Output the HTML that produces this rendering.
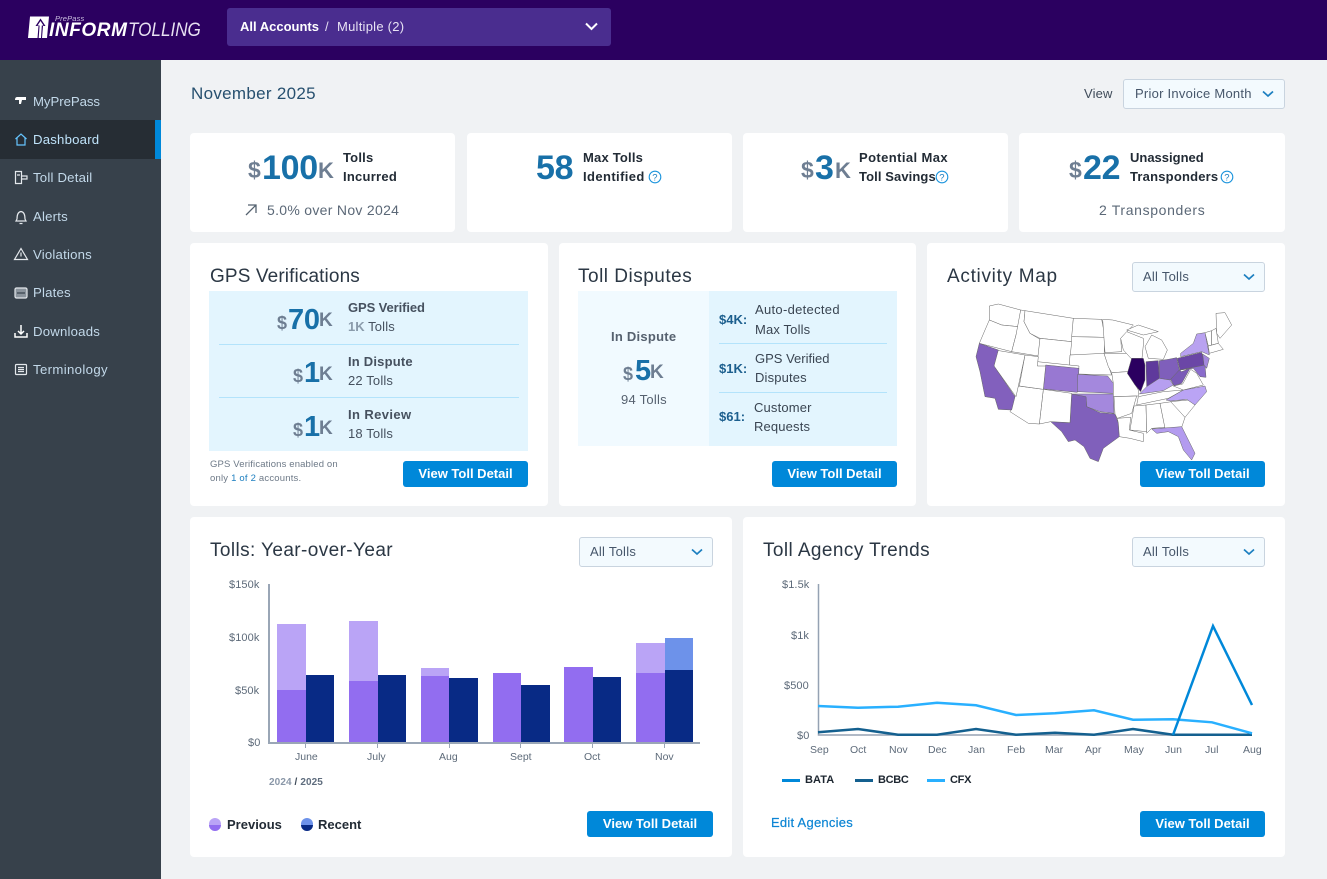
<!DOCTYPE html>
<html><head><meta charset="utf-8"><style>
*{box-sizing:border-box}
html,body{margin:0;padding:0}
body{width:1327px;height:879px;position:relative;overflow:hidden;background:#f0f2f4;font-family:"Liberation Sans",sans-serif;letter-spacing:.15px;color:#3f4b59}
.a,.t,.c{position:absolute}
.t{white-space:nowrap;line-height:1;font-size:13px}
.b{font-weight:bold;letter-spacing:.2px}
.c{background:#fff;border-radius:4px}
.h{font-size:19px;color:#2b3744;letter-spacing:.5px}
.nv{font-size:13.2px;color:#c3d9ea;left:33px;letter-spacing:.2px}
.btn{position:absolute;width:125px;height:26px;background:#0088d9;border-radius:3px;color:#fff;font-weight:bold;font-size:13px;line-height:26px;text-align:center;letter-spacing:0}
.sel{position:absolute;height:30px;background:#f3fafe;border:1px solid #c9d4df;border-radius:3px;font-size:13px;line-height:28px;padding-left:10px;color:#46566a;letter-spacing:.25px}
.sel svg{position:absolute;right:9px;top:10px}
.blue{color:#1870a8;letter-spacing:0}.gr{color:#6e7e92;letter-spacing:0}
.ax{font-size:11px;color:#5d6a79;letter-spacing:.1px}
.mo{font-size:10.5px;letter-spacing:0}
</style></head><body>
<div class="a" style="left:0;top:0;width:1327px;height:60px;background:#2b0060"></div>
<svg class="a" style="left:27px;top:15px" width="24" height="24" viewBox="0 0 24 24"><path d="M3 1.500H22L20 23H1Z" fill="#fff"/><path d="M13.500 3.500L18.500 11H16L15 23H10.500L11.500 11H8.500Z" fill="#2b0060"/><path d="M13.500 6L16.500 10.500H14.800L14 23H11.700L12.600 10.500H10.500Z" fill="#fff"/></svg>
<div class="t" style="left:55px;top:15px;font-size:7.5px;font-style:italic;color:#cbbfe0;letter-spacing:.02em">PrePass</div>
<div class="t" style="left:49px;top:21px;font-size:19px;font-weight:bold;font-style:italic;color:#fff;letter-spacing:.6px">INFORM</div>
<div class="t" style="left:128px;top:21px;font-size:19px;font-style:italic;color:#e7e0f1;letter-spacing:0;transform:scaleX(.9);transform-origin:left">TOLLING</div>
<div class="a" style="left:227px;top:8px;width:384px;height:38px;background:#4a2d8f;border-radius:3px"></div>
<div class="t b" style="left:240px;top:20px;color:#fff;letter-spacing:0">All Accounts</div>
<div class="t" style="left:325px;top:20px;color:#e4ddf2">/</div>
<div class="t" style="left:337px;top:20px;color:#e8e3f4;letter-spacing:.25px">Multiple (2)</div>
<svg class="a" style="left:584px;top:21px" width="15" height="12"><path d="M2 2.500L7.500 8L13 2.500" fill="none" stroke="#fff" stroke-width="2"/></svg>

<div class="a" style="left:0;top:60px;width:161px;height:819px;background:#37414b"></div>
<div class="a" style="left:0;top:120px;width:161px;height:39px;background:#262d34"></div>
<div class="a" style="left:155px;top:120px;width:6px;height:39px;background:#0088d9"></div>
<svg class="a" style="left:12px;top:92px" width="18" height="290" viewBox="0 0 18 290" fill="none" stroke="#e4e8ec" stroke-width="1.200">
<path d="M3 8H14V5H5Q3 5 3 8ZM7 8H10L9 12H7Z" fill="#fff" stroke="none"/>
<path d="M3.500 47L9 42L14.500 47M5 46V53H13V46" stroke="#66c5ff"/>
<path d="M3.500 79.500H9.500V91.500H3.500ZM9.500 84H15V87H9.500M5 83H8"/>
<path d="M5 127Q5 120 9 119.500Q13 120 13 127L14 129H4ZM7.500 131.500H10.500"/>
<path d="M9 156.500L15.500 167.500H2.500ZM9 160.500V164.500"/>
<rect x="3" y="196" width="12" height="10" rx="1.500" fill="#8b949d"/><path d="M5 201H13" stroke="#37414b"/>
<path d="M9 233V242M6 239L9 242L12 239M3 241V245H15V241" stroke="#fff" stroke-width="1.500"/>
<rect x="3.500" y="272.500" width="11" height="10" rx="1"/><path d="M6 275.500H12M6 277.500H12M6 279.500H12"/>
</svg>
<div class="t nv" style="top:95px;letter-spacing:-.05px">MyPrePass</div>
<div class="t nv" style="top:133px;color:#bfe3fa">Dashboard</div>
<div class="t nv" style="top:171px">Toll Detail</div>
<div class="t nv" style="top:210px">Alerts</div>
<div class="t nv" style="top:248px">Violations</div>
<div class="t nv" style="top:286px">Plates</div>
<div class="t nv" style="top:325px">Downloads</div>
<div class="t nv" style="top:363px;letter-spacing:.35px">Terminology</div>

<div class="t" style="left:191px;top:85px;font-size:17px;color:#27506f;letter-spacing:.3px">November 2025</div>
<div class="t" style="left:1084px;top:87px;color:#3f4b59">View</div>
<div class="sel" style="left:1123px;top:79px;width:162px;padding-left:11px">Prior Invoice Month<svg width="12" height="8" style="right:10px"><path d="M1 1.500L6 6L11 1.500" fill="none" stroke="#1c7fc0" stroke-width="1.700"/></svg></div>

<!-- row 1 -->
<div class="c" style="left:190px;top:133px;width:265px;height:99px"></div>
<div class="c" style="left:467px;top:133px;width:265px;height:99px"></div>
<div class="c" style="left:743px;top:133px;width:265px;height:99px"></div>
<div class="c" style="left:1019px;top:133px;width:266px;height:99px"></div>

<div class="t b gr" style="left:248px;top:159px;font-size:23px">$</div>
<div class="t b blue" style="left:262px;top:151px;font-size:34px;letter-spacing:-.3px">100</div>
<div class="t b gr" style="left:318px;top:160px;font-size:22px">K</div>
<div class="t b" style="left:343px;top:151px;color:#222b35">Tolls</div>
<div class="t b" style="left:343px;top:170px;color:#222b35;letter-spacing:.25px">Incurred</div>
<svg class="a" style="left:244px;top:203px" width="14" height="14"><path d="M2 12L12 2M4 2H12V10" fill="none" stroke="#55626f" stroke-width="1.300"/></svg>
<div class="t" style="left:267px;top:203px;font-size:14px;color:#5b6877;letter-spacing:.3px">5.0% over Nov 2024</div>

<div class="t b blue" style="left:536px;top:151px;font-size:34px;letter-spacing:-.3px">58</div>
<div class="t b" style="left:583px;top:151px;color:#222b35">Max Tolls</div>
<div class="t b" style="left:583px;top:170px;color:#222b35;letter-spacing:.4px">Identified</div>
<svg class="a" style="left:648px;top:170px" width="14" height="14"><circle cx="7" cy="7" r="5.800" fill="none" stroke="#1d95dd" stroke-width="1.100"/><text x="7" y="10.500" font-size="9.500" text-anchor="middle" fill="#1d7fc0" font-family="Liberation Sans">?</text></svg>

<div class="t b gr" style="left:801px;top:159px;font-size:23px">$</div>
<div class="t b blue" style="left:815px;top:151px;font-size:34px">3</div>
<div class="t b gr" style="left:835px;top:160px;font-size:22px">K</div>
<div class="t b" style="left:859px;top:151px;color:#222b35;letter-spacing:.4px">Potential Max</div>
<div class="t b" style="left:859px;top:170px;color:#222b35;letter-spacing:.1px">Toll Savings</div>
<svg class="a" style="left:935px;top:170px" width="14" height="14"><circle cx="7" cy="7" r="5.800" fill="none" stroke="#1d95dd" stroke-width="1.100"/><text x="7" y="10.500" font-size="9.500" text-anchor="middle" fill="#1d7fc0" font-family="Liberation Sans">?</text></svg>

<div class="t b gr" style="left:1069px;top:159px;font-size:23px">$</div>
<div class="t b blue" style="left:1083px;top:151px;font-size:34px;letter-spacing:-.3px">22</div>
<div class="t b" style="left:1130px;top:151px;color:#222b35;letter-spacing:0">Unassigned</div>
<div class="t b" style="left:1130px;top:170px;color:#222b35">Transponders</div>
<svg class="a" style="left:1220px;top:170px" width="14" height="14"><circle cx="7" cy="7" r="5.800" fill="none" stroke="#1d95dd" stroke-width="1.100"/><text x="7" y="10.500" font-size="9.500" text-anchor="middle" fill="#1d7fc0" font-family="Liberation Sans">?</text></svg>
<div class="t" style="left:1099px;top:203px;font-size:14px;color:#5b6877;letter-spacing:.65px">2 Transponders</div>

<!-- row 2 -->
<div class="c" style="left:190px;top:243px;width:358px;height:263px"></div>
<div class="c" style="left:559px;top:243px;width:357px;height:263px"></div>
<div class="c" style="left:927px;top:243px;width:358px;height:263px"></div>

<div class="t h" style="left:210px;top:267px;letter-spacing:.12px">GPS Verifications</div>
<div class="a" style="left:209px;top:291px;width:319px;height:160px;background:#e3f5fe"></div>
<div class="a" style="left:219px;top:344px;width:300px;height:1px;background:#b3e3fb"></div>
<div class="a" style="left:219px;top:397px;width:300px;height:1px;background:#b3e3fb"></div>
<div class="t b gr" style="left:277px;top:314px;font-size:18px">$</div>
<div class="t b blue" style="left:288px;top:306px;font-size:29px;letter-spacing:-.3px">70</div>
<div class="t b gr" style="left:319px;top:311px;font-size:19px">K</div>
<div class="t b" style="left:348px;top:301px;color:#46515f;letter-spacing:-.1px">GPS Verified</div>
<div class="t" style="left:348px;top:320px;color:#46515f"><span class="b" style="color:#8a9bab;letter-spacing:0">1K</span> Tolls</div>
<div class="t b gr" style="left:293px;top:367px;font-size:18px">$</div>
<div class="t b blue" style="left:304px;top:359px;font-size:29px">1</div>
<div class="t b gr" style="left:319px;top:365px;font-size:19px">K</div>
<div class="t b" style="left:348px;top:355px;color:#46515f">In Dispute</div>
<div class="t" style="left:348px;top:374px;color:#46515f">22 Tolls</div>
<div class="t b gr" style="left:293px;top:421px;font-size:18px">$</div>
<div class="t b blue" style="left:304px;top:413px;font-size:29px">1</div>
<div class="t b gr" style="left:319px;top:419px;font-size:19px">K</div>
<div class="t b" style="left:348px;top:408px;color:#46515f;letter-spacing:.4px">In Review</div>
<div class="t" style="left:348px;top:427px;color:#46515f">18 Tolls</div>
<div class="t" style="left:210px;top:460px;font-size:9.5px;color:#6d7987;letter-spacing:.15px">GPS Verifications enabled on</div>
<div class="t" style="left:210px;top:474px;font-size:9.5px;color:#6d7987;letter-spacing:.2px">only <span style="color:#1d7fc0">1 of 2</span> accounts.</div>
<div class="btn" style="left:403px;top:461px">View Toll Detail</div>

<div class="t h" style="left:578px;top:267px">Toll Disputes</div>
<div class="a" style="left:578px;top:291px;width:131px;height:155px;background:#f1faff"></div>
<div class="a" style="left:709px;top:291px;width:188px;height:155px;background:#e3f5fe"></div>
<div class="a" style="left:719px;top:343px;width:168px;height:1px;background:#b3e3fb"></div>
<div class="a" style="left:719px;top:392px;width:168px;height:1px;background:#b3e3fb"></div>
<div class="t b" style="left:611px;top:330px;color:#56616f;letter-spacing:.25px">In Dispute</div>
<div class="t b gr" style="left:623px;top:365px;font-size:18px">$</div>
<div class="t b blue" style="left:635px;top:357px;font-size:29px">5</div>
<div class="t b gr" style="left:650px;top:363px;font-size:19px">K</div>
<div class="t" style="left:621px;top:393px;color:#56616f;letter-spacing:.25px">94 Tolls</div>
<div class="t b" style="left:719px;top:313px;color:#1c5f8e;letter-spacing:0">$4K:</div>
<div class="t" style="left:755px;top:303px;color:#3a4552;letter-spacing:.3px">Auto-detected</div>
<div class="t" style="left:755px;top:323px;color:#3a4552">Max Tolls</div>
<div class="t b" style="left:719px;top:362px;color:#1c5f8e;letter-spacing:0">$1K:</div>
<div class="t" style="left:755px;top:352px;color:#3a4552;letter-spacing:0">GPS Verified</div>
<div class="t" style="left:755px;top:371px;color:#3a4552">Disputes</div>
<div class="t b" style="left:719px;top:410px;color:#1c5f8e;letter-spacing:0">$61:</div>
<div class="t" style="left:754px;top:401px;color:#3a4552">Customer</div>
<div class="t" style="left:754px;top:420px;color:#3a4552">Requests</div>
<div class="btn" style="left:772px;top:461px">View Toll Detail</div>

<div class="t h" style="left:947px;top:267px;letter-spacing:.7px">Activity Map</div>
<div class="sel" style="left:1132px;top:262px;width:133px">All Tolls<svg width="12" height="8"><path d="M1 1.500L6 6L11 1.500" fill="none" stroke="#1c7fc0" stroke-width="1.700"/></svg></div>
<svg class="a" style="left:930px;top:290px" width="340" height="180" viewBox="0 0 1020 540" stroke="#666" stroke-width="1.500" stroke-linejoin="round" fill="#fff">
<path d="M178 48L205 42L272 60L265 110L215 105L178 90Z"/>
<path d="M178 90L215 105L265 110L258 135L245 185L148 160L165 120Z"/>
<path d="M272 60L285 62L282 95L300 130L330 148L325 198L245 185L258 135Z"/>
<path d="M285 62L430 85L425 155L330 145L300 130L282 95Z"/>
<path d="M430 85L515 88L525 142L425 140Z"/>
<path d="M425 140L525 142L522 198L420 195Z"/>
<path d="M330 145L425 155L418 225L322 215Z"/>
<path d="M420 195L522 190L545 255L445 252L447 228L418 225Z"/>
<path d="M340 297L347 225L447 235L442 307Z" fill="#9878d2"/>
<path d="M443 253L533 258L550 280L550 310L442 305Z" fill="#a488dd"/>
<path d="M425 312L550 312L552 370L510 365L470 350L468 322L425 318Z" fill="#a488dd"/>
<path d="M425 312L468 320L470 350L510 368L555 372L565 400L568 440L520 475L505 515L480 505L462 470L435 450L415 455L395 425L362 395L420 398Z" fill="#8060bb"/>
<path d="M340 298L425 310L420 398L362 395L328 402Z"/>
<path d="M265 288L340 298L328 402L295 400L240 365L250 330Z"/>
<path d="M285 195L325 200L322 228L347 228L340 298L268 288Z"/>
<path d="M195 180L285 195L265 288L258 320L192 228Z"/>
<path d="M148 160L205 180L192 228L255 320L245 360L205 358L195 325L165 320L150 245L138 200Z" fill="#8260bd"/>
<path d="M518 88L548 90L610 105L572 145L575 185L525 188Z"/>
<path d="M522 190L600 190L612 205L595 245L545 248L535 230Z"/>
<path d="M545 248L592 245L625 300L625 318L610 318L550 320L550 280Z"/>
<path d="M552 320L620 318L605 370L562 385L555 372Z"/>
<path d="M562 385L602 382L598 420L640 430L640 455L600 445L568 440L565 400Z"/>
<path d="M572 145L590 125L640 145L640 165L636 205L603 205L580 180Z"/>
<path d="M590 120L625 105L685 125L640 135ZM655 205L645 170L665 135L695 150L712 180L700 208Z"/>
<path d="M605 205L640 205L645 225L645 270L632 305L615 285L592 250Z" fill="#2b0060"/>
<path d="M648 215L685 212L688 265L650 290Z" fill="#5f3a9c"/>
<path d="M688 212L715 208L740 203L748 240L720 270L688 265Z" fill="#7f5fbb"/>
<path d="M628 312L650 290L688 265L720 270L730 285L700 302Z" fill="#b69ff0"/>
<path d="M625 320L700 305L760 300L715 325L620 345Z"/>
<path d="M612 348L648 345L650 425L600 420Z"/>
<path d="M648 345L690 340L705 412L665 415L650 430Z"/>
<path d="M690 340L725 335L765 382L755 412L705 415Z"/>
<path d="M722 335L775 330L795 345L765 382Z"/>
<path d="M708 330L760 300L825 288L830 305L795 345L770 328L722 333Z" fill="#baa4f5"/>
<path d="M730 288L758 282L782 238L800 250L820 285L760 300Z"/>
<path d="M722 268L748 240L755 245L780 235L755 280L732 287Z" fill="#7a5ab7"/>
<path d="M742 205L815 187L825 225L750 240Z" fill="#6b46a6"/>
<path d="M752 190L790 160L800 132L825 128L838 195L815 185L752 200Z" fill="#b9a2f0"/>
<path d="M750 240L825 225L828 262L810 260L790 235Z" fill="#8a6ccc"/>
<path d="M818 192L838 205L830 235L822 225Z" fill="#a488dd"/>
<path d="M665 417L755 410L795 490L785 510L760 480L745 440L715 425L680 430Z" fill="#b39bef"/>
<path d="M858 70L885 68L905 105L870 145L860 130Z"/>
<path d="M825 128L845 122L845 165L835 168ZM845 122L858 115L865 160L845 165Z"/>
<path d="M835 168L865 160L880 178L838 190Z"/>
</svg>
<div class="btn" style="left:1140px;top:461px">View Toll Detail</div>

<!-- row 3 -->
<div class="c" style="left:190px;top:517px;width:542px;height:340px"></div>
<div class="c" style="left:743px;top:517px;width:542px;height:340px"></div>
<div class="t h" style="left:210px;top:541px;letter-spacing:.4px">Tolls: Year-over-Year</div>
<div class="sel" style="left:579px;top:537px;width:134px">All Tolls<svg width="12" height="8"><path d="M1 1.500L6 6L11 1.500" fill="none" stroke="#1c7fc0" stroke-width="1.700"/></svg></div>
<svg class="a" style="left:190px;top:570px" width="530" height="190" shape-rendering="crispEdges">
<g fill="#baa4f6"><rect x="87" y="54" width="29" height="67"/><rect x="159" y="51" width="29" height="60"/><rect x="231" y="98" width="28" height="9"/><rect x="446" y="73" width="29" height="31"/></g>
<g fill="#926df0"><rect x="87" y="120" width="29" height="52"/><rect x="159" y="111" width="29" height="61"/><rect x="231" y="106" width="28" height="66"/><rect x="303" y="103" width="28" height="69"/><rect x="374" y="97" width="29" height="75"/><rect x="446" y="103" width="29" height="69"/></g>
<rect x="475" y="68" width="28" height="33" fill="#6d92ea"/>
<g fill="#082a85"><rect x="116" y="105" width="28" height="67"/><rect x="188" y="105" width="28" height="67"/><rect x="259" y="108" width="29" height="64"/><rect x="331" y="115" width="29" height="57"/><rect x="403" y="107" width="28" height="65"/><rect x="475" y="100" width="28" height="72"/></g>
<rect x="78" y="14" width="2" height="158" fill="#9aa6b6"/>
<rect x="78" y="172" width="432" height="2" fill="#9aa6b6"/>
<g fill="#9aa6b6"><rect x="115" y="174" width="1" height="4"/><rect x="187" y="174" width="1" height="4"/><rect x="259" y="174" width="1" height="4"/><rect x="330" y="174" width="1" height="4"/><rect x="402" y="174" width="1" height="4"/><rect x="474" y="174" width="1" height="4"/></g>
</svg>
<div class="t ax" style="left:229px;top:580px">$150k</div>
<div class="t ax" style="left:229px;top:633px">$100k</div>
<div class="t ax" style="left:235px;top:686px">$50k</div>
<div class="t ax" style="left:248px;top:738px">$0</div>
<div class="t ax mo" style="left:295px;top:752px">June</div>
<div class="t ax mo" style="left:367px;top:752px">July</div>
<div class="t ax mo" style="left:439px;top:752px">Aug</div>
<div class="t ax mo" style="left:510px;top:752px">Sept</div>
<div class="t ax mo" style="left:584px;top:752px">Oct</div>
<div class="t ax mo" style="left:655px;top:752px">Nov</div>
<div class="t b" style="left:269px;top:778px;font-size:10px;color:#8a97a8;letter-spacing:.1px">2024 <span style="color:#3f4b59">/</span> <span style="color:#5f6d7e">2025</span></div>
<svg class="a" style="left:208px;top:817px" width="170" height="14"><circle cx="7" cy="7" r="6" fill="#baa4f6"/><path d="M1 8A6 6 0 0 0 13 8Z" fill="#926df0"/><circle cx="99" cy="7" r="6" fill="#6d92ea"/><path d="M93 8A6 6 0 0 0 105 8Z" fill="#082a85"/></svg>
<div class="t b" style="left:227px;top:818px;color:#222b35;letter-spacing:0">Previous</div>
<div class="t b" style="left:318px;top:818px;color:#222b35;letter-spacing:0">Recent</div>
<div class="btn" style="left:587px;top:811px;width:126px">View Toll Detail</div>

<div class="t h" style="left:763px;top:541px;letter-spacing:.42px">Toll Agency Trends</div>
<div class="sel" style="left:1132px;top:537px;width:133px">All Tolls<svg width="12" height="8"><path d="M1 1.500L6 6L11 1.500" fill="none" stroke="#1c7fc0" stroke-width="1.700"/></svg></div>
<svg class="a" style="left:745px;top:570px" width="530" height="180" fill="none">
<path d="M73.500 14V165H507" stroke="#95a2b3" stroke-width="1.500"/>
<polyline points="73,162.300 113,159 153,164.700 192,164.700 231,159 271,164.700 310,162.700 349,164.700 388,159 428,164.700 467,164.700 507,164.700" stroke="#14608f" stroke-width="2.500"/>
<polyline points="73,136 113,137.700 153,136.700 192,132.700 231,135.300 271,145 310,143.300 349,140.300 388,149.700 428,149.300 467,152.300 507,163.300" stroke="#29b0ff" stroke-width="2.500"/>
<polyline points="428,165 468,56 507,135" stroke="#0088d9" stroke-width="2.500"/>
</svg>
<div class="t ax" style="left:782px;top:580px">$1.5k</div>
<div class="t ax" style="left:791px;top:631px">$1k</div>
<div class="t ax" style="left:784px;top:681px">$500</div>
<div class="t ax" style="left:797px;top:731px">$0</div>
<div class="t ax mo" style="left:810px;top:745px">Sep</div>
<div class="t ax mo" style="left:850px;top:745px">Oct</div>
<div class="t ax mo" style="left:889px;top:745px">Nov</div>
<div class="t ax mo" style="left:928px;top:745px">Dec</div>
<div class="t ax mo" style="left:968px;top:745px">Jan</div>
<div class="t ax mo" style="left:1007px;top:745px">Feb</div>
<div class="t ax mo" style="left:1045px;top:745px">Mar</div>
<div class="t ax mo" style="left:1085px;top:745px">Apr</div>
<div class="t ax mo" style="left:1124px;top:745px">May</div>
<div class="t ax mo" style="left:1165px;top:745px">Jun</div>
<div class="t ax mo" style="left:1205px;top:745px">Jul</div>
<div class="t ax mo" style="left:1243px;top:745px">Aug</div>
<div class="a" style="left:782px;top:779px;width:18px;height:3px;background:#0088d9"></div>
<div class="a" style="left:855px;top:779px;width:18px;height:3px;background:#14608f"></div>
<div class="a" style="left:927px;top:779px;width:18px;height:3px;background:#29b0ff"></div>
<div class="t b" style="left:805px;top:775px;font-size:11px;color:#1d2630;letter-spacing:.1px">BATA</div>
<div class="t b" style="left:878px;top:775px;font-size:11px;color:#1d2630;letter-spacing:-.3px">BCBC</div>
<div class="t b" style="left:950px;top:775px;font-size:11px;color:#1d2630;letter-spacing:-.3px">CFX</div>
<div class="t" style="left:771px;top:816px;color:#0c85d4;-webkit-text-stroke:.2px #0c85d4;letter-spacing:.25px">Edit Agencies</div>
<div class="btn" style="left:1140px;top:811px">View Toll Detail</div>
</body></html>
